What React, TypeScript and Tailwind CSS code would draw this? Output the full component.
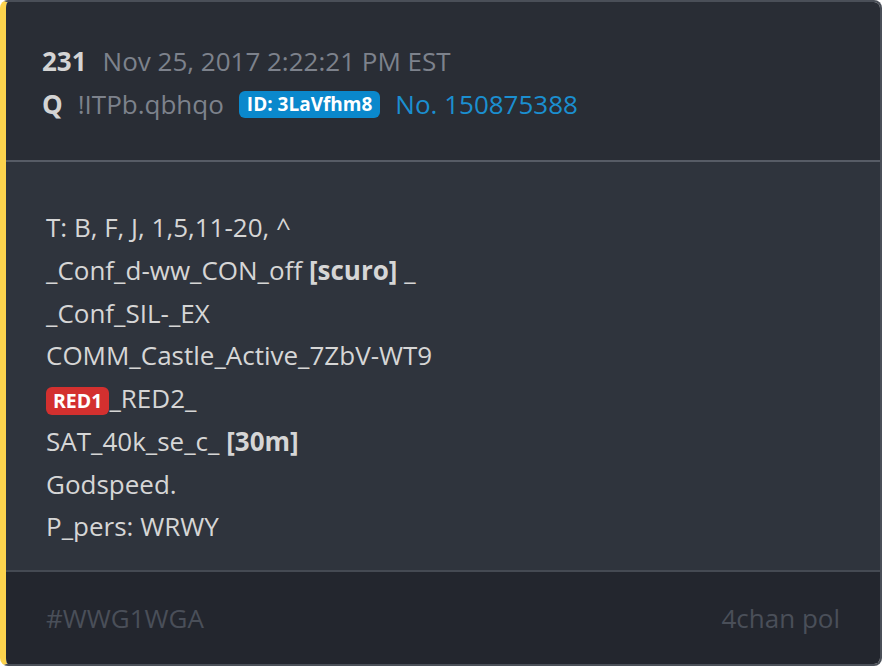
export default function App() {
  const lines: React.ReactNode[] = [
    'T: B, F, J, 1,5,11-20, ^',
    <>
      _Conf_d-ww_CON_off <span className="font-bold">[scuro]</span> _
    </>,
    '_Conf_SIL-_EX',
    'COMM_Castle_Active_7ZbV-WT9',
    <>
      <span className="inline-block rounded-[6px] bg-[#d3302f] px-[7px] align-middle text-[19.5px] leading-[28px] font-bold text-white">
        RED1
      </span>
      _RED2_
    </>,
    <>
      SAT_40k_se_c_ <span className="font-bold">[30m]</span>
    </>,
    'Godspeed.',
    'P_pers: WRWY',
  ]

  return (
    <div className="h-[666px] w-[882px] bg-white" style={{ fontFamily: '"Open Sans", sans-serif' }}>
      <div className="flex h-full flex-col overflow-hidden rounded-[8px] border-t-2 border-r-2 border-b-2 border-l-[6px] border-t-[#4a4f58] border-r-[#4a4f58] border-b-[#4a4f58] border-l-[#fcd34d] text-[26px] leading-[42.7px]">
        <div className="bg-[#292d35] px-[36px] pt-[38px] pb-[35px]">
          <div className="flex items-center gap-[16px]">
            <span className="font-bold text-[#d4d4d4]">231</span>
            <span className="text-[#7d828c]">Nov 25, 2017 2:22:21 PM EST</span>
          </div>
          <div className="flex items-center gap-[15px]">
            <span className="font-bold text-[#d4d4d4]">Q</span>
            <span className="text-[#7d828c]">!ITPb.qbhqo</span>
            <span className="rounded-[6px] bg-[#0a88cc] px-[8px] text-[19px] leading-[27px] font-bold text-white">
              ID: 3LaVfhm8
            </span>
            <span className="text-[#1b8fd0]">No. 150875388</span>
          </div>
        </div>
        <div className="h-[2px] bg-[#575c66]" />
        <div className="flex-1 bg-[#2f343d] px-[40px] pt-[44px] text-[#d6d6d6]">
          {lines.map((l, i) => (
            <div key={i} className="h-[42.7px]">
              {l}
            </div>
          ))}
        </div>
        <div className="h-[2px] bg-[#454a53]" />
        <div className="flex h-[92px] items-center justify-between bg-[#23262e] px-[40px] text-[#4a4f59]">
          <span>#WWG1WGA</span>
          <span>4chan pol</span>
        </div>
      </div>
    </div>
  )
}
